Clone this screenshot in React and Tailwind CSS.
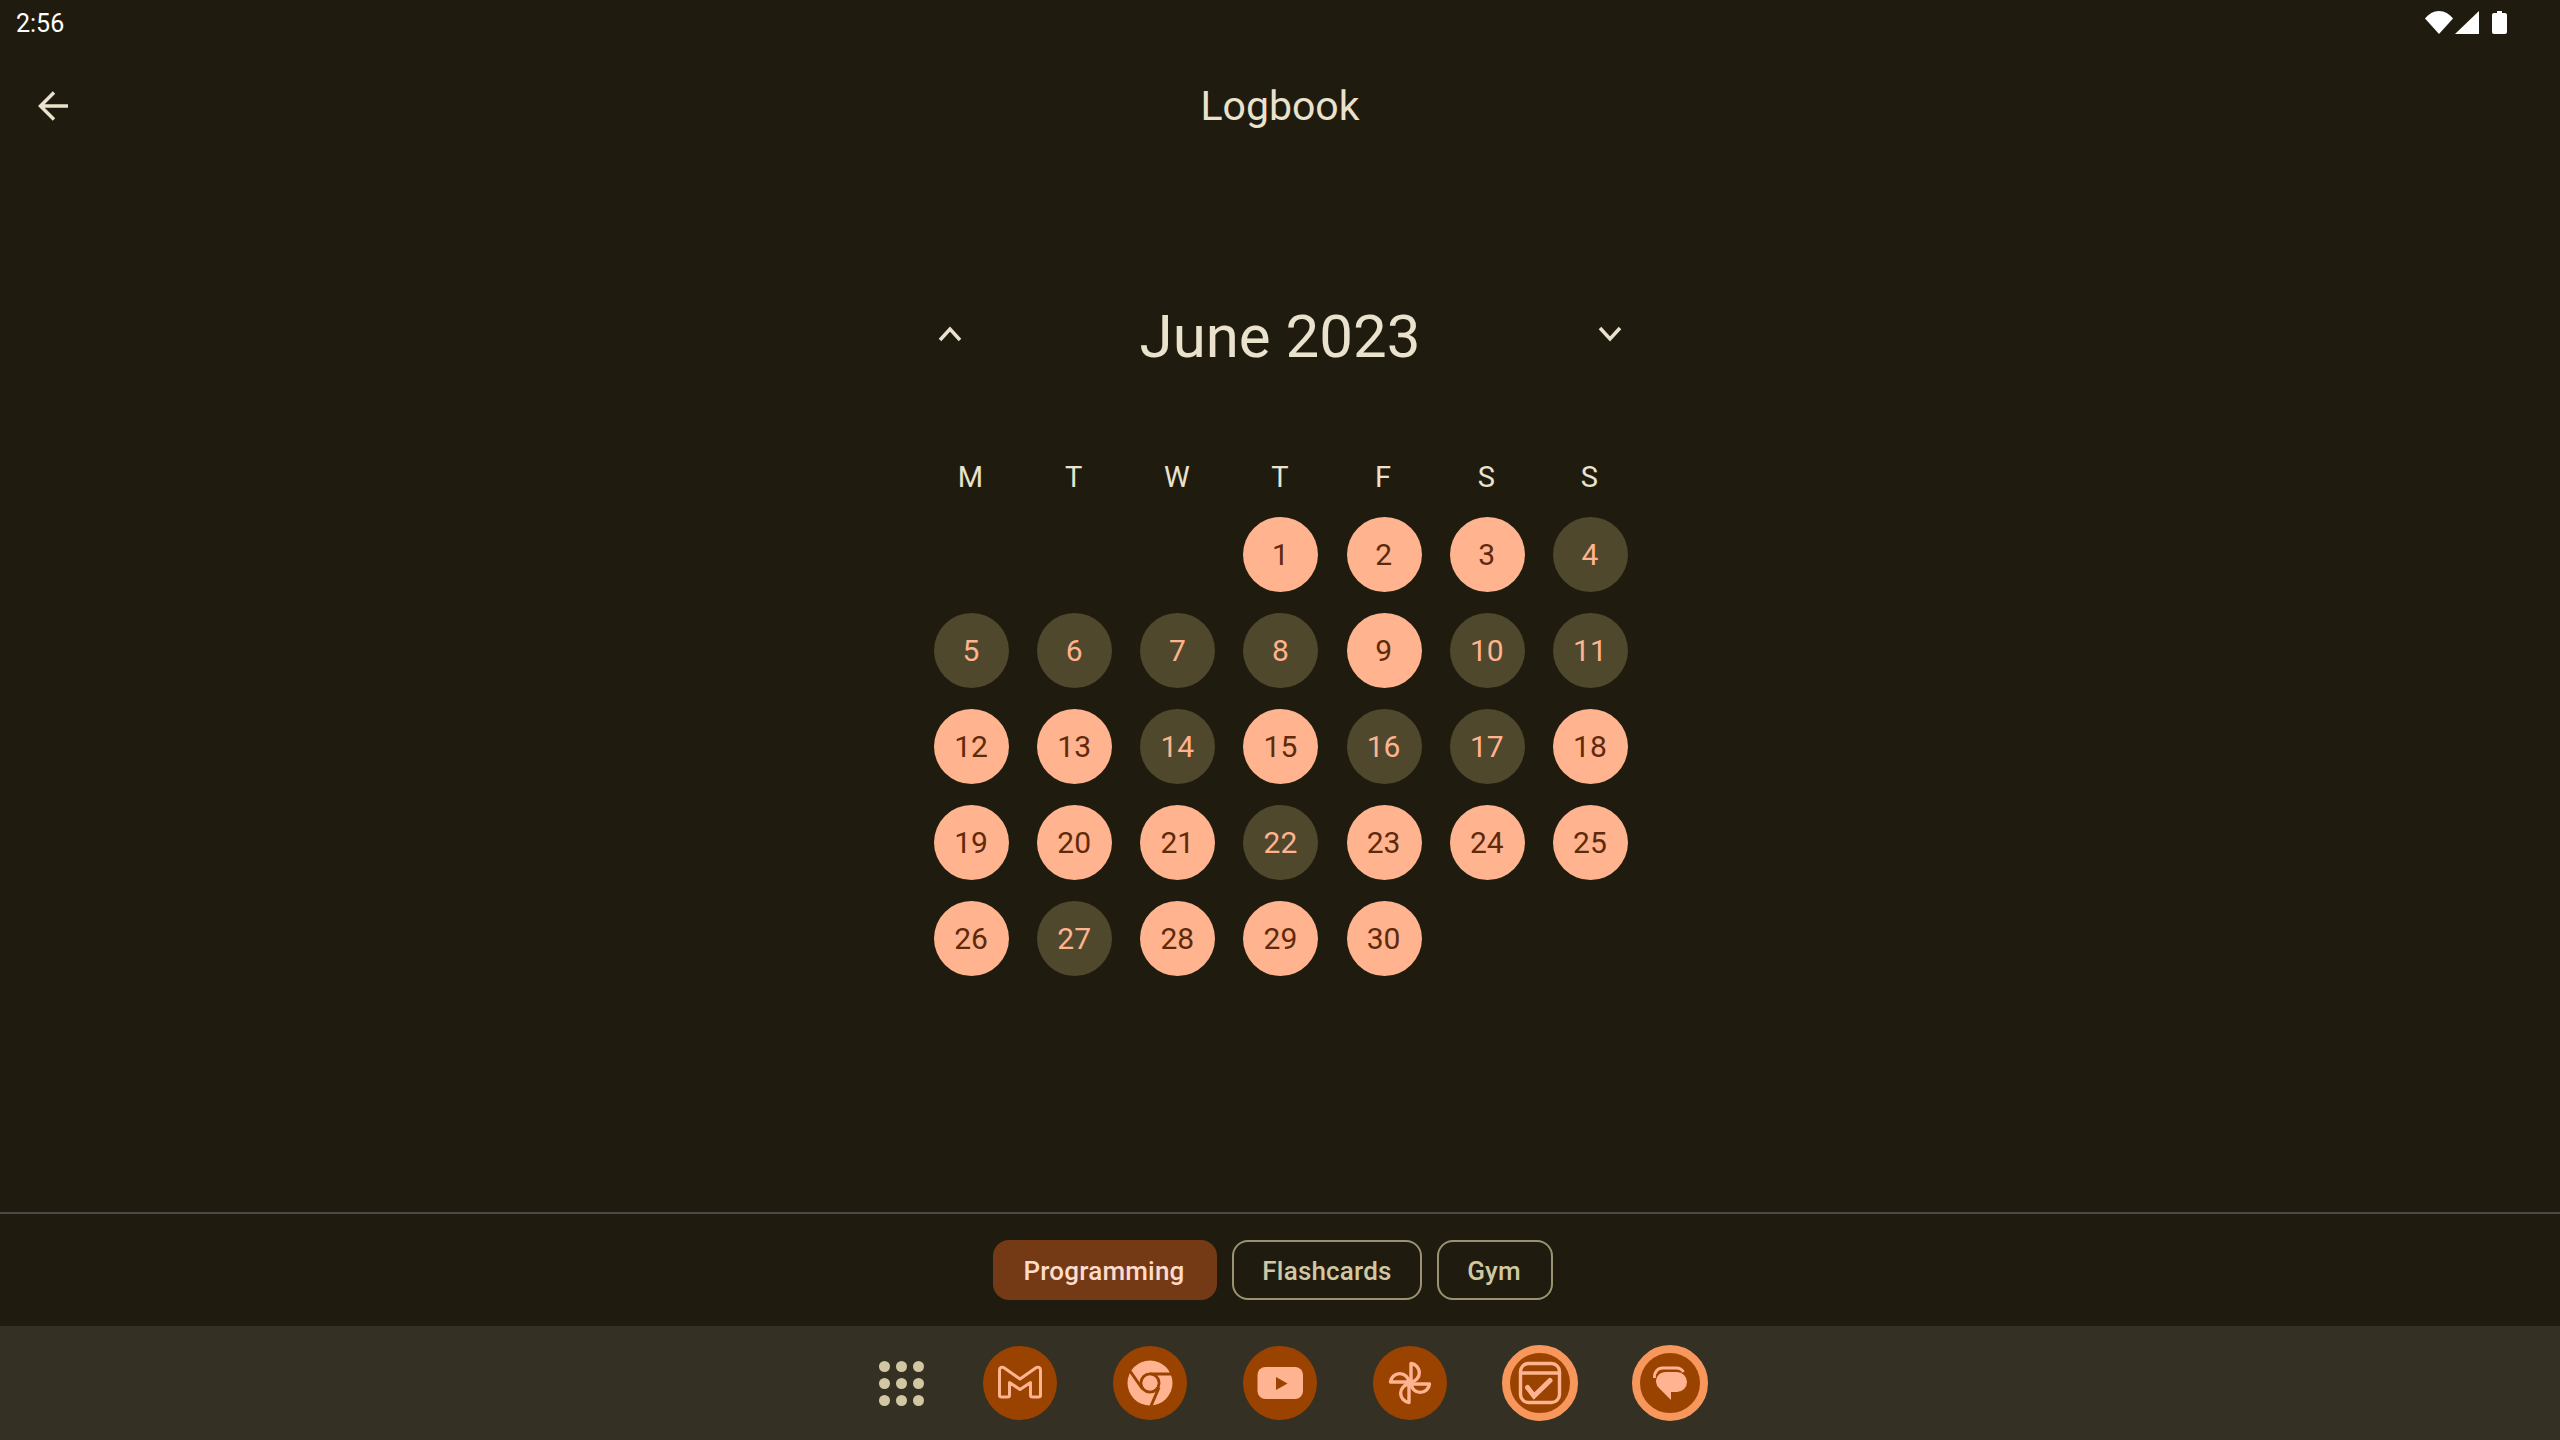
const WEEKDAYS = ['M', 'T', 'W', 'T', 'F', 'S', 'S'];
const DONE_DAYS = [1, 2, 3, 9, 12, 13, 15, 18, 19, 20, 21, 23, 24, 25, 26, 28, 29, 30];
const DAYS = Array.from({ length: 30 }, (_, i) => i + 1);

function StatusIcons() {
  return (
    <div className="flex items-center">
      <svg width="28" height="23" viewBox="0 0 28 23" className="mr-[2px]">
        <path d="M0 7.5C3.5 3 8.5 0 14 0s10.500 3 14 7.500L14 23z" fill="#fff" />
      </svg>
      <svg width="24" height="23" viewBox="0 0 24 23" className="mr-[13px]">
        <path d="M24 0v23H0z" fill="#fff" />
      </svg>
      <svg width="15" height="23" viewBox="0 0 15 23">
        <path d="M5 0h5v2h3c1.200 0 2 .8 2 2v17c0 1.200-.8 2-2 2H2c-1.200 0-2-.8-2-2V4c0-1.200.8-2 2-2h3z" fill="#fff" />
      </svg>
    </div>
  );
}

function DockCircle({ ringed, children }) {
  return (
    <div className="w-[74px] h-[74px] flex items-center justify-center shrink-0">
      <div className={`shrink-0 rounded-full bg-[#9a4300] flex items-center justify-center ${ringed ? 'w-[76px] h-[76px] border-[8px] border-[#f7975c]' : 'w-[74px] h-[74px]'}`}>
        <svg width="74" height="74" viewBox="0 0 74 74" className="shrink-0">{children}</svg>
      </div>
    </div>
  );
}

const PEACH = '#ffb390';
const RUST = '#9a4300';

export default function App() {
  return (
    <div className="w-[2560px] h-[1440px] flex flex-col overflow-hidden bg-[#1f1c0f] text-[#eae2cd] [font-family:Roboto,sans-serif]">
      {/* Status bar */}
      <div className="h-12 shrink-0 flex items-center justify-between pl-4 pr-[53px] text-white text-[25px]">
        <span>2:56</span>
        <div className="-mt-[4px]"><StatusIcons /></div>
      </div>

      {/* Toolbar */}
      <div className="h-[116px] shrink-0 grid grid-cols-[1fr_auto_1fr] items-center">
        <svg width="32" height="32" viewBox="0 0 32 32" className="ml-[38px]">
          <path d="M30 16H3M16 2.500 2.500 16 16 29.500" fill="none" stroke="#eae2cd" strokeWidth="3.500" />
        </svg>
        <h1 className="text-[41px] font-normal leading-none pt-[1px]">Logbook</h1>
        <div />
      </div>

      {/* Calendar */}
      <main className="flex-1 flex flex-col items-center pt-[123px] pl-[2px]">
        <div className="w-[694px]">
          <div className="h-24 flex items-center justify-between pl-[4px] pr-[6px]">
            <svg width="24" height="16" viewBox="0 0 24 16" className="-mt-[2px]">
              <path d="M2 14 12 3l10 11" fill="none" stroke="#eae2cd" strokeWidth="3.500" />
            </svg>
            <h2 className="text-[60px] font-normal leading-none mt-[3px]">June 2023</h2>
            <svg width="24" height="16" viewBox="0 0 24 16" className="-mt-[2px]">
              <path d="M2 2l10 11L22 2" fill="none" stroke="#eae2cd" strokeWidth="3.500" />
            </svg>
          </div>
          <div className="mt-[73px] mb-[21px] h-10 grid grid-cols-[repeat(7,75px)] justify-between items-center text-center text-[29px]">
            {WEEKDAYS.map((d, i) => <span key={i} className="pr-[2px]">{d}</span>)}
          </div>
          <div className="grid grid-cols-[repeat(7,75px)] justify-between auto-rows-[75px] gap-y-[21px]">
            <div className="col-span-3" />
            {DAYS.map(day => (
              <div
                key={day}
                className={`rounded-full flex items-center justify-center text-[30px] pr-[1px] ${DONE_DAYS.includes(day) ? 'bg-[#ffb38e] text-[#5f2a0c]' : 'bg-[#4f482c] text-[#ffb38e]'}`}
              >
                {day}
              </div>
            ))}
          </div>
        </div>
      </main>

      {/* Logbook tabs */}
      <div className="h-[2px] shrink-0 bg-[#4b4a49]" />
      <div className="h-[112px] shrink-0 flex items-center justify-center gap-[15px] pr-[14px] text-[26px] font-medium tracking-[0.2px]">
        <div className="w-[224px] h-[60px] rounded-[16px] bg-[#743a16] text-[#ffdbca] flex items-center justify-center pt-[3px] pr-[2px]">Programming</div>
        <div className="w-[190px] h-[60px] rounded-[16px] border-2 border-[#9b9272] text-[#d1c8a3] flex items-center justify-center pt-[3px]">Flashcards</div>
        <div className="w-[116px] h-[60px] rounded-[16px] border-2 border-[#9b9272] text-[#d1c8a3] flex items-center justify-center pt-[3px] pr-[2px]">Gym</div>
      </div>

      {/* Dock */}
      <div className="h-[114px] shrink-0 bg-[#343023] flex items-center justify-center gap-[56px] pl-[22px]">
        <div className="w-[52px] flex justify-center">
          <div className="grid grid-cols-[repeat(3,11px)] gap-[6px]">
            {Array.from({ length: 9 }, (_, i) => <div key={i} className="w-[11px] h-[11px] rounded-full bg-[#d1c8a3]" />)}
          </div>
        </div>

        <DockCircle>
          <path
            d="M16.500 24c0-2.500 2.500-3.500 4.500-2.200L37 33l16-11.200c2-1.300 4.500-.3 4.500 2.200v25c0 1.300-.8 2-2 2h-6c-1.200 0-2-.7-2-2V36.500L37 43.500l-10.500-7V49c0 1.300-.8 2-2 2h-6c-1.200 0-2-.7-2-2z"
            fill="none"
            stroke={PEACH}
            strokeWidth="3"
            strokeLinejoin="round"
          />
        </DockCircle>

        <DockCircle>
          <circle cx="37" cy="37" r="22.500" fill={PEACH} />
          <circle cx="37" cy="37" r="9" fill={PEACH} stroke={RUST} strokeWidth="3" />
          <path d="M37 28H60M17 25 29.500 43M38 60 46 41.500" fill="none" stroke={RUST} strokeWidth="3" />
          <circle cx="37" cy="37" r="7.500" fill={PEACH} />
        </DockCircle>

        <DockCircle>
          <rect x="14.500" y="21" width="45.500" height="32" rx="8" fill={PEACH} />
          <path d="M33 31v13l11.500-6.500z" fill={RUST} />
        </DockCircle>

        <DockCircle>
          <g fill="none" stroke={PEACH} strokeWidth="3.400" strokeLinejoin="round">
            <path d="M38 36V17.500a9.300 9.300 0 0 1 0 18.500z" />
            <path d="M38 38H56.500a9.300 9.300 0 0 1-18.500 0z" />
            <path d="M36 38V56.500a9.300 9.300 0 0 1 0-18.500z" />
            <path d="M36 36H17.500a9.300 9.300 0 0 1 18.500 0z" />
          </g>
        </DockCircle>

        <DockCircle ringed>
          <g fill="none" stroke={PEACH}>
            <rect x="17.500" y="17.500" width="39" height="39" rx="8" strokeWidth="3.400" />
            <path d="M17.500 27H56.500" strokeWidth="3.400" />
            <path d="M24.500 41.500 31 50l16-15.500" strokeWidth="5" strokeLinecap="round" />
          </g>
        </DockCircle>

        <DockCircle ringed>
          <path d="M21.500 32c-.5-6 3.500-10 8-10h14c3 0 5.500 1.500 7 4" fill="none" stroke={PEACH} strokeWidth="2.800" />
          <path d="M33 26h11a10 10 0 0 1 0 20h-6v8L26.500 42.500A10 10 0 0 1 23 36c0-6 4-10 10-10z" fill={PEACH} />
        </DockCircle>
      </div>
    </div>
  );
}
